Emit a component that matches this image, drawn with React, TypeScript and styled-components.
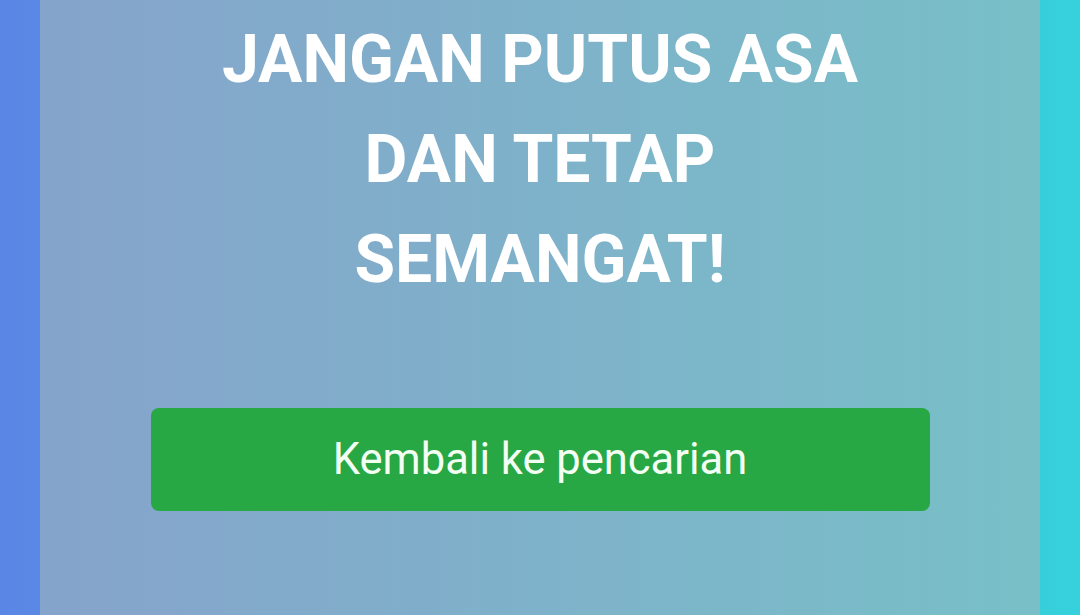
import React, { ReactElement } from 'react'
import styled, { createGlobalStyle } from 'styled-components'

const GlobalStyle = createGlobalStyle`
  html, body {
    margin: 0;
    padding: 0;
    height: 100%;
    overflow: hidden;
  }

  body {
    font-family: Roboto, 'Liberation Sans', Arial, sans-serif;
    background: linear-gradient(to right, #5b86e5, #36d1dc);
  }
`

const Page = styled.div`
  display: flex;
  justify-content: center;
  min-height: 615px;
  padding: 0 40px;
`

const Panel = styled.div`
  flex: 1;
  display: flex;
  flex-direction: column;
  align-items: center;
  padding-top: 10px;
  background: rgba(164, 181, 186, 0.6);
`

const Title = styled.h1`
  margin: 0;
  width: 680px;
  color: #ffffff;
  font-size: 66px;
  font-weight: 700;
  line-height: 100px;
  text-align: center;
`

const BackButton = styled.button`
  margin-top: 98px;
  width: 779px;
  height: 103px;
  border: none;
  border-radius: 8px;
  background: #28a745;
  color: #f4fff4;
  font-family: Roboto, 'Liberation Sans', Arial, sans-serif;
  font-size: 43.5px;
  font-weight: 400;
  cursor: pointer;
`

export default function App(): ReactElement {
  return (
    <>
      <GlobalStyle />
      <Page>
        <Panel>
          <Title>
            JANGAN PUTUS ASA
            <br />
            DAN TETAP
            <br />
            SEMANGAT!
          </Title>
          <BackButton>Kembali ke pencarian</BackButton>
        </Panel>
      </Page>
    </>
  )
}
